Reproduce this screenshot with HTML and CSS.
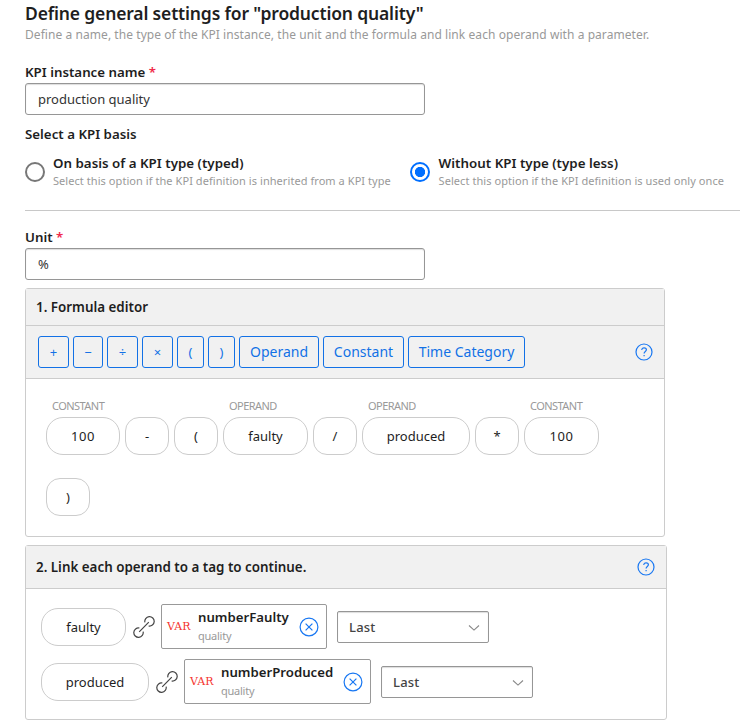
FILE: index.html
```
<!DOCTYPE html>
<html lang="en">
<head>
<meta charset="utf-8">
<title>KPI general settings</title>
<link rel="stylesheet" href="styles.css">
</head>
<body>
<svg class="defs" width="0" height="0" aria-hidden="true">
  <symbol id="help" viewBox="0 0 18 18"><circle cx="9" cy="9" r="8" /><path d="M6.8 7.1C6.8 5.6 7.7 4.8 9.1 4.8S11.4 5.6 11.4 6.8C11.4 8.5 9.1 8.5 9.1 10.5M9.1 12v1.3" /></symbol>
  <symbol id="clear" viewBox="0 0 20 20"><circle cx="10" cy="10" r="8.9" /><path d="M6.6 6.6l6.8 6.8M13.4 6.6l-6.8 6.8" /></symbol>
  <symbol id="link" viewBox="0 0 22 22"><path d="M11.9 6.4A4.7 4.7 0 1 1 15.6 10M6.4 12A4.7 4.7 0 1 0 10.1 15.6M6.2 15.8L15.8 6.2" /></symbol>
  <symbol id="chevron" viewBox="0 0 12 8"><path d="M1 1.5l5 4.6 5-4.6" /></symbol>
</svg>
<main class="page">
  <h1 class="title">Define general settings for "production quality"</h1>
  <p class="subtitle">Define a name, the type of the KPI instance, the unit and the formula and link each operand with a parameter.</p>

  <label class="label name-label" for="name">KPI instance name <span class="required">*</span></label>
  <input class="input" id="name" type="text" value="production quality">

  <div class="label basis-label">Select a KPI basis</div>
  <div class="options">
    <div class="option">
      <span class="radio"></span>
      <div class="option-body"><div class="option-title">On basis of a KPI type (typed)</div><div class="option-text">Select this option if the KPI definition is inherited from a KPI type</div></div>
    </div>
    <div class="option">
      <span class="radio checked"></span>
      <div class="option-body"><div class="option-title">Without KPI type (type less)</div><div class="option-text">Select this option if the KPI definition is used only once</div></div>
    </div>
  </div>
  <div class="rule"></div>

  <label class="label unit-label" for="unit">Unit <span class="required">*</span></label>
  <input class="input" id="unit" type="text" value="%">

  <section class="panel formula">
    <header class="panel-head">1. Formula editor</header>
    <div class="toolbar">
      <button class="btn w31">+</button>
      <button class="btn w30">−</button>
      <button class="btn w31">÷</button>
      <button class="btn w31">×</button>
      <button class="btn w27">(</button>
      <button class="btn w27">)</button>
      <button class="btn word w80">Operand</button>
      <button class="btn word w81">Constant</button>
      <button class="btn word w117">Time Category</button>
      <svg class="icon help"><use href="#help" /></svg>
    </div>
    <div class="terms">
      <div class="term"><span class="kind">CONSTANT</span><span class="pill w74 num">100</span></div>
      <div class="term"><span class="kind"></span><span class="pill">-</span></div>
      <div class="term"><span class="kind"></span><span class="pill">(</span></div>
      <div class="term"><span class="kind">OPERAND</span><span class="pill w85">faulty</span></div>
      <div class="term"><span class="kind"></span><span class="pill">/</span></div>
      <div class="term"><span class="kind">OPERAND</span><span class="pill w108">produced</span></div>
      <div class="term"><span class="kind"></span><span class="pill">*</span></div>
      <div class="term"><span class="kind">CONSTANT</span><span class="pill w75 num">100</span></div>
      <div class="term"><span class="kind"></span><span class="pill">)</span></div>
    </div>
  </section>

  <section class="panel links">
    <header class="panel-head tall">2. Link each operand to a tag to continue.<svg class="icon help"><use href="#help" /></svg></header>
    <div class="rows">
      <div class="row">
        <span class="pill w85">faulty</span>
        <svg class="icon link"><use href="#link" /></svg>
        <div class="tag w166"><span class="var">VAR</span><div class="tag-text"><div class="tag-name">numberFaulty</div><div class="tag-sub">quality</div></div><svg class="icon clear"><use href="#clear" /></svg></div>
        <div class="select">Last<svg class="icon chevron"><use href="#chevron" /></svg></div>
      </div>
      <div class="row">
        <span class="pill w108">produced</span>
        <svg class="icon link"><use href="#link" /></svg>
        <div class="tag w187"><span class="var">VAR</span><div class="tag-text"><div class="tag-name">numberProduced</div><div class="tag-sub">quality</div></div><svg class="icon clear"><use href="#clear" /></svg></div>
        <div class="select">Last<svg class="icon chevron"><use href="#chevron" /></svg></div>
      </div>
    </div>
  </section>
</main>
</body>
</html>
```
FILE: styles.css
```
* { box-sizing: border-box; }
body { margin: 0; background: #fff; color: #1e1e1e; font: 400 13px/18px "Noto Sans", sans-serif; overflow: hidden; }
.defs { position: absolute; }
.page { padding-left: 25px; display: flex; flex-direction: column; align-items: flex-start; white-space: nowrap; }

.title { margin: 0; padding-top: 1px; font-size: 17.5px; line-height: 25px; font-weight: 600; letter-spacing: -0.16px; }
.subtitle { margin: 0; font-size: 12px; line-height: 18px; color: #999; letter-spacing: 0.065px; }
.label { font-weight: 600; font-size: 13.3px; line-height: 18px; }
.required { color: #f0284a; }
.name-label { margin-top: 19px; }
.basis-label { margin-top: 10px; }
.unit-label { margin-top: 17px; }
.input { width: 400px; height: 32px; margin: 2px 0 0; padding: 0 12px; border: 1px solid #969696; border-radius: 3px; box-shadow: inset 0 1px 1px #ddd; font: 400 13px "Noto Sans", sans-serif; color: #333; outline: none; }

.options { display: flex; gap: 20px; margin-top: 11px; }
.option { display: flex; gap: 8px; width: 365px; height: 36px; align-items: center; }
.option + .option { width: 320px; }
.option-body { padding-bottom: 2px; }
.radio { flex: none; width: 20px; height: 20px; border: 2px solid #777; border-radius: 50%; }
.radio.checked { border-color: #006fff; background: radial-gradient(circle, #006fff 4.8px, transparent 5.4px); }
.option + .option .radio { margin-right: 0.6px; }
.option-title { font-weight: 600; font-size: 13.35px; line-height: 18px; }
.option-text { font-size: 11px; line-height: 17px; letter-spacing: 0.06px; color: #999; }
.rule { align-self: stretch; height: 1px; margin-top: 20px; background: #c8c8c8; }

.panel { border: 1px solid #ccc; border-radius: 3px; background: #fff; }
.formula { width: 640px; height: 249px; margin-top: 8px; }
.links { width: 642px; height: 175px; margin-top: 8px; }
.panel-head { display: flex; align-items: center; height: 37px; padding: 0 11px 0 10px; border-bottom: 1px solid #ccc; background: #f1f1f1; font-size: 13.38px; font-weight: 600; }
.panel-head.tall { height: 43px; }
.toolbar { display: flex; align-items: center; gap: 4px; height: 53px; padding: 0 11px 0 12px; border-bottom: 1px solid #ccc; background: #f1f1f1; }
.btn { height: 32px; padding: 0; border: 1px solid #1271e6; border-radius: 3px; background: transparent; color: #1271e6; font: 400 13px "Noto Sans", sans-serif; }
.btn.word { padding-bottom: 2px; font-size: 14px; }

.icon { flex: none; fill: none; stroke: #1877f2; stroke-width: 1.2; }
.help { width: 18px; height: 18px; margin-left: auto; }
.link { width: 22px; height: 22px; margin: 0 6px 0 7px; stroke: #444; }
.clear { width: 20px; height: 20px; margin-left: auto; }
.chevron { width: 12px; height: 8px; margin: 2px 0 0 auto; stroke: #888; stroke-width: 1.1; }

.terms { display: flex; flex-wrap: wrap; column-gap: 5px; padding: 15px 40px 0 20px; }
.term { display: flex; flex-direction: column; padding-top: 3px; }
.kind { height: 20px; padding-left: 6px; font-size: 11px; line-height: 18px; letter-spacing: -0.54px; color: #999; }
.pill { flex: none; display: flex; align-items: center; justify-content: center; width: 44px; height: 38px; border: 1px solid #ccc; border-radius: 14px; background: #fff; }
.pill.w74, .pill.w75, .pill.w85, .pill.w108 { border-radius: 17px; }
.num { letter-spacing: 0.5px; }

.rows { display: flex; flex-direction: column; gap: 10px; padding: 15px; }
.row { display: flex; align-items: center; height: 45px; }
.tag { display: flex; align-items: center; height: 45px; padding: 0 7px 0 5px; border: 1px solid #999; border-radius: 2px; }
.var { width: 31px; color: #f5352f; font: 11px "DejaVu Serif", serif; }
.tag-name { margin-top: -1px; font-weight: 600; font-size: 13.2px; line-height: 18px; }
.tag-sub { padding-top: 1px; font-size: 11px; line-height: 18px; letter-spacing: -0.25px; color: #999; }
.select { display: flex; align-items: center; width: 152px; height: 32px; margin-left: 10px; padding: 0 8px 0 11px; border: 1px solid #969696; border-radius: 2px; box-shadow: inset 0 1px 1px #ddd; font-weight: 500; letter-spacing: 0.2px; color: #444; }

.w27 { width: 27px; } .w30 { width: 30px; } .w31 { width: 31px; }
.w74 { width: 74px; } .w75 { width: 75px; } .w80 { width: 80px; } .w81 { width: 81px; } .w85 { width: 85px; }
.w108 { width: 108px; } .w117 { width: 117px; } .w166 { width: 166px; } .w187 { width: 187px; }
```
